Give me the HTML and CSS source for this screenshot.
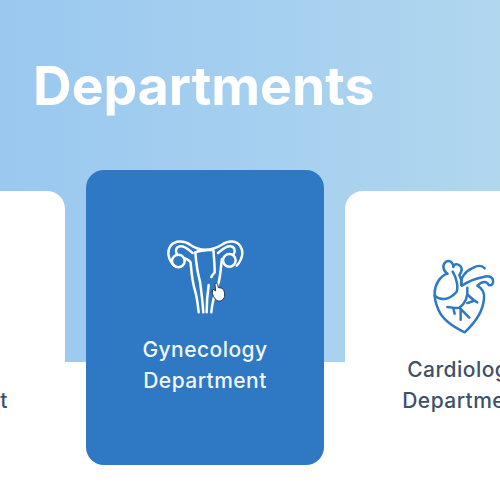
FILE: index.html
```html
<!DOCTYPE html>
<html lang="en">
<head>
<meta charset="utf-8">
<title>Departments</title>
<link rel="stylesheet" href="styles.css">
</head>
<body>
<main class="page">
  <header class="hero">
    <h1 class="title">Departments</h1>
  </header>
  <section class="cards">
    <article class="card">
      <div class="icon"></div>
      <p class="label">Neurology<br>Department</p>
    </article>
    <article class="card card-active">
      <svg class="icon icon-uterus" viewBox="0 0 330 300" fill="none" stroke="#fff" stroke-width="7.5" stroke-linecap="round" stroke-linejoin="round">
        <path d="M72 122C54 104 50 78 62 62C76 46 102 46 122 60C136 70 150 74 166 74C182 74 198 70 214 60C234 46 258 46 270 62C282 78 278 104 260 122"/>
        <path d="M82 90C74 78 78 66 90 64C104 62 116 74 128 84"/>
        <path d="M250 90C258 78 254 66 242 64C228 62 216 74 204 84"/>
        <circle cx="85" cy="108" r="19"/>
        <circle cx="238" cy="106" r="19"/>
        <path d="M104 100C114 104 120 106 122 114C124 140 126 170 136 200C142 222 144 244 146 262"/>
        <path d="M136 82C150 76 172 76 190 74C192 96 194 120 194 142C190 148 186 150 184 156"/>
        <path d="M136 82C138 110 142 140 150 170C154 200 158 232 160 262"/>
        <path d="M216 102C212 126 212 150 206 172C196 200 186 232 184 262"/>
        <path d="M176 180C172 208 170 236 170 262"/>
        <path d="M187 198C186 208 192 222 204 228C214 230 224 222 224 210C224 200 222 194 216 190C212 188 208 188 205 188L203 178C202 172 194 174 195 180L197 198L192 194C188 192 186 194 187 198Z" fill="#fff" stroke="#1d3557" stroke-width="3"/>
      </svg>
      <p class="label">Gynecology<br>Department</p>
    </article>
    <article class="card">
      <svg class="icon icon-heart" viewBox="0 0 264 300" fill="none" stroke="#2f78c4" stroke-width="7.5" stroke-linecap="round" stroke-linejoin="round">
        <path d="M82 86C68 76 66 58 78 50C90 44 100 54 100 66C102 56 112 56 120 62C128 70 124 82 118 90C124 100 126 110 124 120"/>
        <path d="M82 86C60 94 46 116 44 142C42 164 50 182 56 196C70 228 104 248 134 262C164 234 190 196 192 160C194 144 186 130 172 122C188 108 200 108 206 120C216 124 222 114 218 102C212 92 202 92 190 96C170 100 146 108 126 122"/>
        <path d="M124 120C120 100 136 78 156 70C170 62 186 60 194 70"/>
        <path d="M44 152C64 170 92 162 110 140C114 130 112 100 98 80"/>
        <path d="M142 128C144 150 142 172 118 188C106 192 96 186 82 186"/>
        <path d="M144 150C152 158 160 166 172 172M160 168C152 170 148 174 142 174M118 188L148 218M122 192V224M100 190L104 206"/>
      </svg>
      <p class="label">Cardiology<br>Department</p>
    </article>
  </section>
</main>
</body>
</html>
```
FILE: styles.css
```css
* { box-sizing: border-box; }
html, body { margin: 0; padding: 0; background: #fff; }
body { width: 500px; height: 500px; overflow: hidden; font-family: "Inter", "Liberation Sans", sans-serif; }
.page { width: 500px; height: 500px; overflow: hidden; }
.hero {
  height: 362px;
  padding: 52px 0 0 33px;
  background: linear-gradient(90deg, #9ac8ef 0%, #a5cff0 50%, #b0d7ee 100%);
}
.title {
  margin: 0;
  font-size: 53.5px;
  line-height: 68px;
  font-weight: 700;
  color: #fff;
}
.cards {
  display: flex;
  align-items: flex-start;
  gap: 21px;
  width: 756px;
  margin: -192px 0 0 -173px;
}
.card {
  flex: 0 0 238px;
  height: 254px;
  margin-top: 21px;
  padding-top: 54px;
  border-radius: 18px;
  background: #fff;
  color: #3e5168;
  text-align: center;
}
.card-active {
  height: 295px;
  margin-top: 0;
  padding-top: 55px;
  background: #2e78c4;
  color: #f2f7fc;
}
.icon { display: block; height: 100px; margin: 0 auto; }
.icon-uterus { width: 110px; }
.icon-heart { width: 88px; }
.label {
  margin: 9px 0 0;
  font-size: 21px;
  line-height: 31px;
  font-weight: 500;
  letter-spacing: 0.45px;
}
```
